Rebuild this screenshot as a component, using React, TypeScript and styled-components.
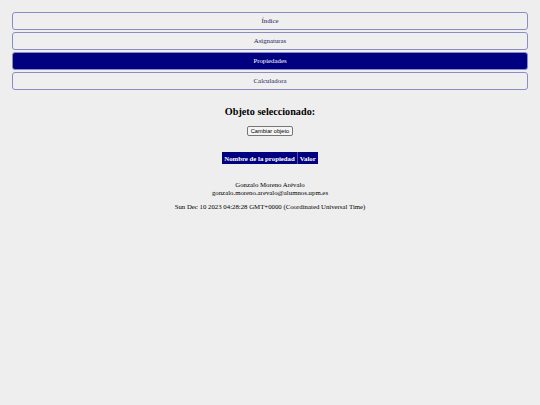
import React from "react";
import styled, { createGlobalStyle } from "styled-components";

const Global = createGlobalStyle`
  html, body {
    margin: 0;
    padding: 0;
    background: #eeeeee;
  }
  body {
    font-family: "Liberation Serif", "Times New Roman", serif;
    color: #000;
  }
`;

const Page = styled.div`
  min-height: 405px;
  background: #eeeeee;
  display: flex;
  flex-direction: column;
  align-items: stretch;
  font-family: "Liberation Serif", "Times New Roman", serif;
`;

const Nav = styled.nav`
  display: flex;
  flex-direction: column;
  gap: 2px;
  padding: 12px 12px 0;
`;

const NavButton = styled.button<{ $active?: boolean }>`
  box-sizing: border-box;
  height: 18px;
  width: 100%;
  margin: 0;
  padding: 0;
  border: 1px solid #8c8cc4;
  border-radius: 3px;
  background: ${(p) => (p.$active ? "#000080" : "#efefef")};
  color: ${(p) => (p.$active ? "#ffffff" : "#1c1c5e")};
  font-family: "Liberation Serif", "Times New Roman", serif;
  font-size: 6.8px;
  line-height: 16px;
  text-align: center;
  cursor: pointer;
`;

const Main = styled.main`
  display: flex;
  flex-direction: column;
  align-items: center;
`;

const Heading = styled.h2`
  margin: 16px 0 0;
  font-family: "Liberation Serif", "Times New Roman", serif;
  font-size: 10.2px;
  line-height: 11px;
  font-weight: bold;
`;

const SmallButton = styled.button`
  box-sizing: border-box;
  margin-top: 9px;
  height: 10px;
  padding: 0 3px;
  border: 1px solid #767676;
  border-radius: 2px;
  background: #f4f4f4;
  color: #000;
  font-family: "Liberation Sans", Arial, sans-serif;
  font-size: 5.7px;
  line-height: 8px;
`;

const Table = styled.table`
  margin-top: 16px;
  border-collapse: collapse;
  background: #000080;
`;

const HeadCell = styled.th`
  height: 12px;
  padding: 0 2px;
  color: #fff;
  font-family: "Liberation Serif", "Times New Roman", serif;
  font-size: 6.8px;
  font-weight: bold;
  white-space: nowrap;
  & + & {
    border-left: 1px solid #4a4aa8;
  }
`;

const Footer = styled.footer`
  margin-top: 17px;
  display: flex;
  flex-direction: column;
  align-items: center;
  font-family: "Liberation Serif", "Times New Roman", serif;
  font-size: 6.8px;
  line-height: 8px;
`;

const Line = styled.div<{ $gap?: number }>`
  margin-top: ${(p) => p.$gap ?? 0}px;
`;

const navItems = ["Índice", "Asignaturas", "Propiedades", "Calculadora"];

export default function App() {
  return (
    <Page>
      <Global />
      <Nav>
        {navItems.map((n) => (
          <NavButton key={n} $active={n === "Propiedades"}>
            {n}
          </NavButton>
        ))}
      </Nav>
      <Main>
        <Heading>Objeto seleccionado:</Heading>
        <SmallButton>Cambiar objeto</SmallButton>
        <Table>
          <thead>
            <tr>
              <HeadCell>Nombre de la propiedad</HeadCell>
              <HeadCell>Valor</HeadCell>
            </tr>
          </thead>
        </Table>
        <Footer>
          <Line>Gonzalo Moreno Arévalo</Line>
          <Line>gonzalo.moreno.arevalo@alumnos.upm.es</Line>
          <Line $gap={6}>Sun Dec 10 2023 04:28:28 GMT+0000 (Coordinated Universal Time)</Line>
        </Footer>
      </Main>
    </Page>
  );
}
